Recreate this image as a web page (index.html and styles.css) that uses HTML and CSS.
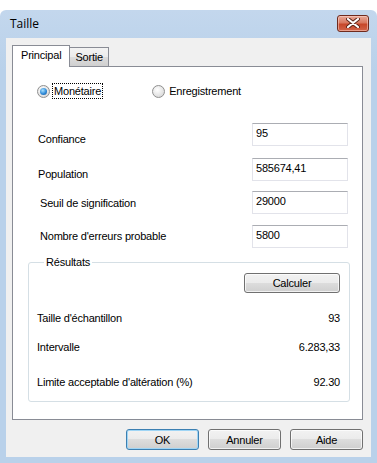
FILE: index.html
```html
<!DOCTYPE html>
<html lang="fr">
<head>
  <meta charset="UTF-8">
  <title>Taille</title>
  <link rel="stylesheet" href="styles.css">
</head>
<body>
  <div class="window">
    <div class="titlebar">
      <span class="title">Taille</span>
      <div class="close-btn">
        <svg width="14" height="10" viewBox="0 0 14 10">
          <path d="M2 1 L12 9 M12 1 L2 9" stroke="#5a2418" stroke-width="4" stroke-linecap="round"/>
          <path d="M2 1 L12 9 M12 1 L2 9" stroke="#ffffff" stroke-width="2.2" stroke-linecap="round"/>
        </svg>
      </div>
    </div>

    <div class="client">
      <div class="tab-control">
        <div class="tabs">
          <div class="tab active">Principal</div>
          <div class="tab">Sortie</div>
        </div>

        <div class="tab-panel">
          <div class="radio-row">
            <label class="radio">
              <span class="radio-circle checked"><span class="radio-dot"></span></span>
              <span class="radio-text focused">Monétaire</span>
            </label>
            <label class="radio second">
              <span class="radio-circle"></span>
              <span class="radio-text">Enregistrement</span>
            </label>
          </div>

          <div class="form-row row-1">
            <span class="field-label low">Confiance</span>
            <input class="field-input" type="text" value="95">
          </div>
          <div class="form-row row-2">
            <span class="field-label low">Population</span>
            <input class="field-input" type="text" value="585674,41">
          </div>
          <div class="form-row row-3">
            <span class="field-label mid">Seuil de signification</span>
            <input class="field-input" type="text" value="29000">
          </div>
          <div class="form-row row-4">
            <span class="field-label high">Nombre d'erreurs probable</span>
            <input class="field-input" type="text" value="5800">
          </div>

          <fieldset class="results">
            <legend>Résultats</legend>
            <div class="calc-row">
              <button class="btn calc">Calculer</button>
            </div>
            <div class="result-row first">
              <span>Taille d'échantillon</span>
              <span>93</span>
            </div>
            <div class="result-row second">
              <span>Intervalle</span>
              <span>6.283,33</span>
            </div>
            <div class="result-row third">
              <span>Limite acceptable d'altération (%)</span>
              <span>92.30</span>
            </div>
          </fieldset>
        </div>
      </div>

      <div class="dialog-buttons">
        <button class="btn default">OK</button>
        <button class="btn">Annuler</button>
        <button class="btn">Aide</button>
      </div>
    </div>
  </div>
</body>
</html>
```

FILE: styles.css
```css
body {
  margin: 0;
  background-color: #ffffff;
  font-family: 'Liberation Sans', Arial, sans-serif;
  font-size: 11px;
  letter-spacing: -0.2px;
  color: #000;
}

.window {
  margin-top: 10px;
  height: 453px;
  box-sizing: border-box;
  padding: 0 6px 6px 6px;
  background: linear-gradient(#c3d7ed, #b9d1ea 60px, #b9d1ea);
  border-radius: 6px 6px 0 0;
}

.titlebar {
  height: 28px;
  display: flex;
  align-items: center;
  justify-content: space-between;
}

.title {
  font-family: 'Open Sans', 'Noto Sans', sans-serif;
  font-size: 12px;
  letter-spacing: 0;
  margin-left: 4px;
  margin-top: -1px;
  color: #000;
}

.close-btn {
  width: 32px;
  height: 17px;
  margin-right: 2px;
  margin-top: -2px;
  box-sizing: border-box;
  border: 1px solid #6f2a1d;
  border-radius: 3px;
  background: linear-gradient(#e8a898, #d8785f 45%, #c7472a 55%, #d2654a);
  box-shadow: inset 0 0 0 1px rgba(255, 220, 210, 0.5);
  display: flex;
  align-items: center;
  justify-content: center;
}

.client {
  height: 419px;
  background-color: #f0f0f0;
  padding-top: 7px;
  box-sizing: border-box;
}

.tab-control {
  margin: 0 8px 0 6px;
}

.tabs {
  display: flex;
  align-items: flex-end;
  height: 21px;
}

.tab {
  height: 19px;
  box-sizing: border-box;
  padding: 0 5px;
  border: 1px solid #898c95;
  border-bottom: none;
  background: linear-gradient(#f3f3f3, #ebebeb 50%, #dddddd 50%, #cfcfcf);
  line-height: 19px;
  margin-left: -1px;
}

.tab.active {
  height: 22px;
  margin-left: 0;
  margin-bottom: -1px;
  padding: 0 8px;
  background: #ffffff;
  line-height: 19px;
  z-index: 1;
  position: relative;
}

.tab-panel {
  height: 354px;
  box-sizing: border-box;
  border: 1px solid #898c95;
  background-color: #ffffff;
  padding-top: 16px;
}

.radio-row {
  display: flex;
  height: 16px;
  align-items: center;
  padding-left: 24px;
}

.radio {
  display: flex;
  align-items: center;
}

.radio.second {
  margin-left: 50px;
}

.radio-circle {
  width: 13px;
  height: 13px;
  box-sizing: border-box;
  border-radius: 50%;
  border: 1px solid #8f8f8f;
  background: radial-gradient(circle at 40% 35%, #ffffff, #e3e3e3 60%, #cfcfcf);
  display: flex;
  align-items: center;
  justify-content: center;
}

.radio-dot {
  width: 7px;
  height: 7px;
  border-radius: 50%;
  background: radial-gradient(circle at 40% 35%, #a9e2ff, #2f8ad8 55%, #14508f);
}

.radio-text {
  margin-left: 4px;
  line-height: 14px;
}

.radio-text.focused {
  outline: 1px dotted #000;
  padding: 0 1px;
  margin-left: 3px;
}

.form-row {
  display: flex;
  align-items: flex-start;
  padding-left: 25px;
}

.row-1 { margin-top: 24px; }
.row-2 { margin-top: 12px; }
.row-3 { margin-top: 10px; }
.row-4 { margin-top: 11px; }

.field-label {
  width: 214px;
  line-height: 14px;
}

.field-label.low { padding-top: 9px; }
.field-label.mid { padding-top: 5px; padding-left: 2px; width: 212px; }
.field-label.high { padding-top: 4px; padding-left: 2px; width: 212px; }

.field-input {
  width: 96px;
  height: 23px;
  box-sizing: border-box;
  margin: 0;
  padding: 0 3px 4px 3px;
  border: 1px solid #e2e3ea;
  border-top-color: #abadb3;
  font-family: 'Liberation Sans', Arial, sans-serif;
  font-size: 11px;
  letter-spacing: -0.2px;
  color: #000;
  background: #ffffff;
  outline: none;
}

.results {
  margin: 7px 12px 0 15px;
  padding: 0 9px 12px 8px;
  border: 1px solid #d5dfe5;
  border-radius: 3px;
}

.results legend {
  margin-left: 7px;
  padding: 0 2px;
  line-height: 14px;
}

.calc-row {
  display: flex;
  justify-content: flex-end;
  margin-top: 4px;
}

.result-row {
  display: flex;
  justify-content: space-between;
  line-height: 14px;
}

.result-row.first { margin-top: 18px; }
.result-row.second { margin-top: 15px; }
.result-row.third { margin-top: 21px; }

.btn {
  width: 73px;
  height: 21px;
  box-sizing: border-box;
  margin: 0;
  padding: 0;
  border: 1px solid #707070;
  border-radius: 3px;
  background: linear-gradient(#f2f2f2, #ebebeb 50%, #dddddd 50%, #cfcfcf);
  box-shadow: inset 0 0 0 1px rgba(255, 255, 255, 0.7);
  font-family: 'Liberation Sans', Arial, sans-serif;
  font-size: 11px;
  letter-spacing: -0.2px;
  color: #000;
}

.btn.calc {
  width: 96px;
  height: 20px;
}

.btn.default {
  border-color: #3c7fb1;
  box-shadow: inset 0 0 0 1px #9fd5f5;
}

.dialog-buttons {
  display: flex;
  justify-content: flex-end;
  gap: 9px;
  margin-top: 9px;
  padding-right: 8px;
}
```
